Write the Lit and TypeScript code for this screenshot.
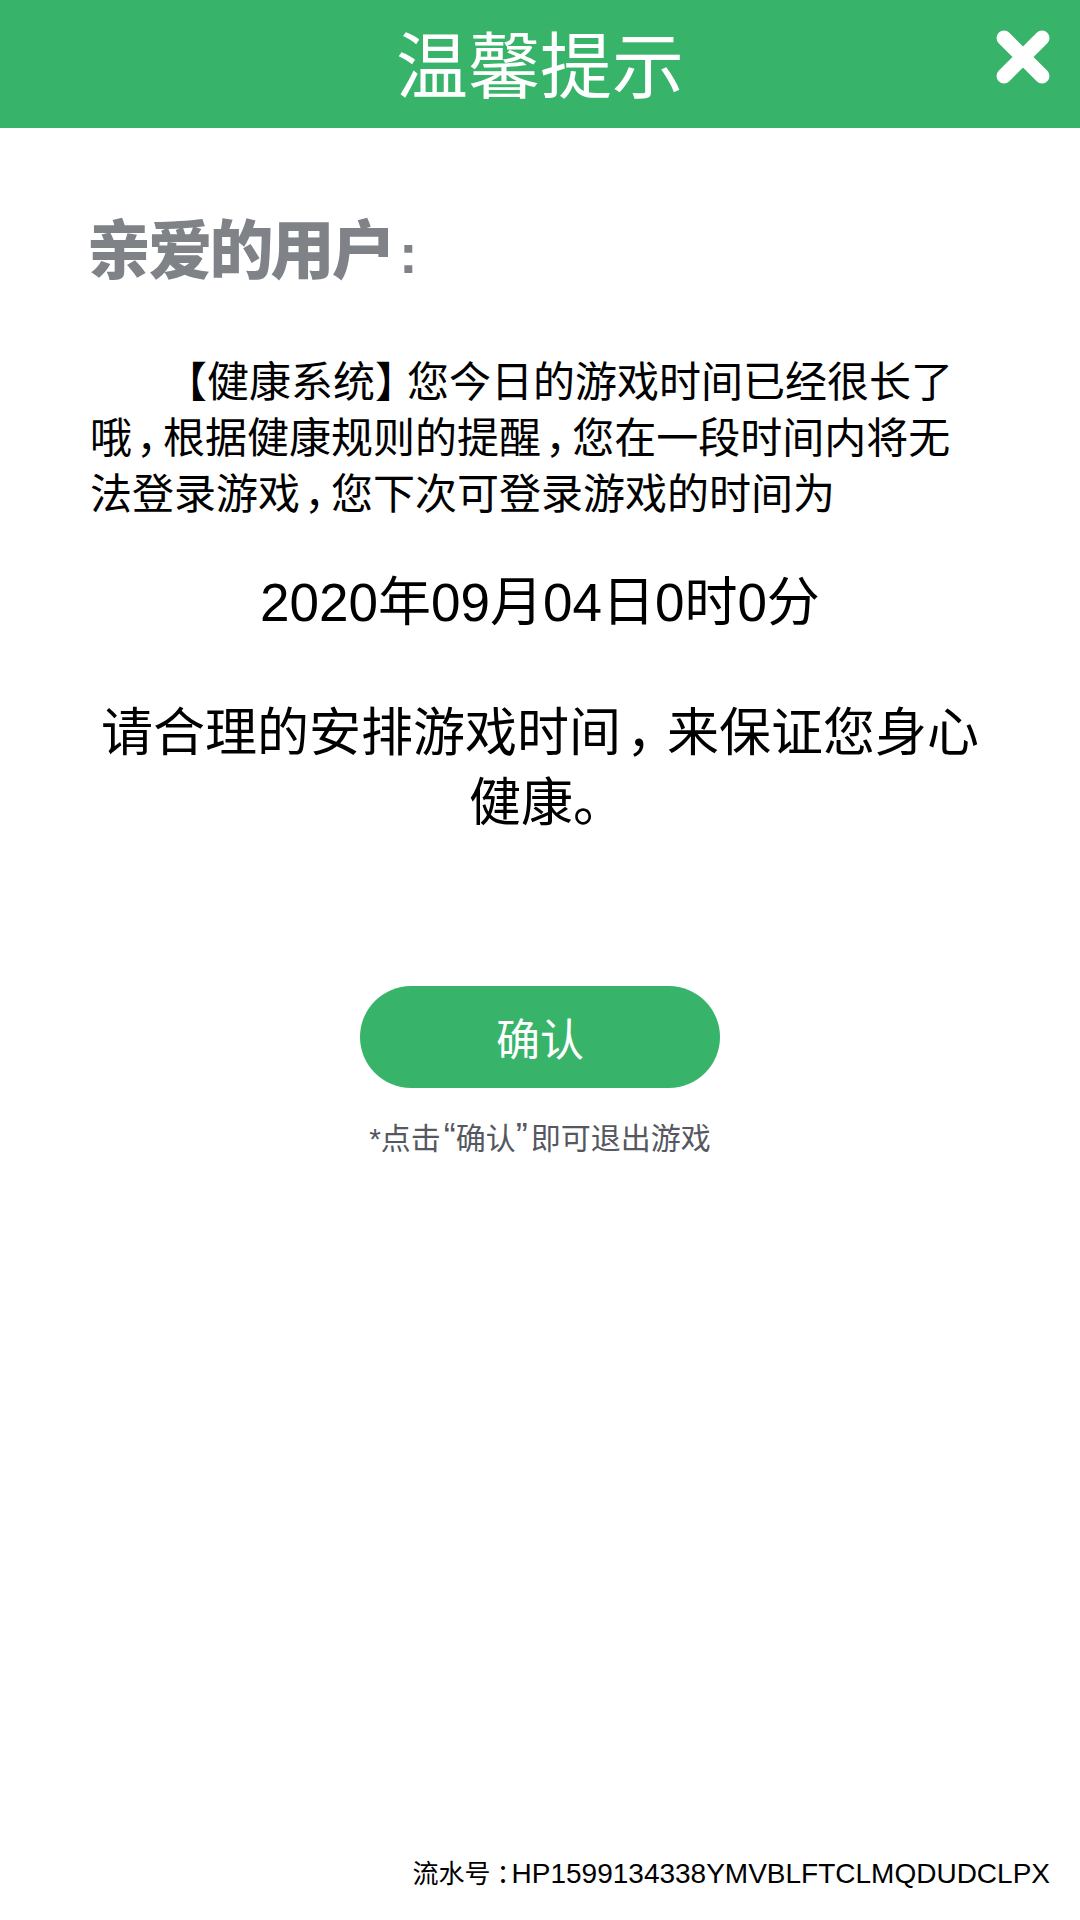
import { LitElement, html, css } from "lit";
import { customElement } from "lit/decorators.js";

@customElement("app-root")
export class AppRoot extends LitElement {
  static override styles = css`
    :host {
      display: flex;
      flex-direction: column;
      width: 1080px;
      height: 1920px;
      background: #fff;
      color: #000;
      font-family: "Liberation Sans", "Noto Sans CJK SC", sans-serif;
    }

    .header {
      position: relative;
      display: flex;
      align-items: center;
      justify-content: center;
      box-sizing: border-box;
      height: 128px;
      padding-bottom: 7px;
      background: #38b36a;
      color: #fff;
      font-size: 72px;
      font-weight: 400;
    }

    .close {
      position: absolute;
      left: 996px;
      top: 30px;
      width: 54px;
      height: 54px;
    }

    .content {
      display: flex;
      flex-direction: column;
      padding: 87px 92px 0 90px;
    }

    .greeting {
      margin-left: -3px;
      height: 72px;
      line-height: 72px;
      font-size: 64px;
      font-weight: 900;
      letter-spacing: -2.8px;
      color: #7f8388;
    }

    .greeting-colon {
      padding-left: 6px;
      font-size: 56px;
      font-weight: 700;
    }

    .intro {
      margin-top: 68px;
      font-size: 42px;
      line-height: 56px;
      white-space: nowrap;
    }

    .indent {
      padding-left: 75px;
    }

    .close-bracket {
      letter-spacing: -10px;
    }

    .comma {
      padding-left: 0.1em;
      letter-spacing: -0.36em;
    }

    .date {
      margin: 45px -2px 0 0;
      text-align: center;
      font-size: 53px;
      line-height: 70px;
    }

    .advice {
      margin: 60px -2px 0 0;
      text-align: center;
      font-size: 52px;
      line-height: 70px;
    }

    .advice .comma {
      letter-spacing: -0.22em;
    }

    .tail {
      padding-left: 14px;
    }

    .actions {
      display: flex;
      flex-direction: column;
      align-items: center;
      margin: 148px -2px 0 0;
    }

    .confirm {
      display: flex;
      align-items: center;
      justify-content: center;
      width: 360px;
      height: 102px;
      border-radius: 51px;
      background: #38b36a;
      color: #fff;
      font-size: 44px;
    }

    .note {
      margin-top: 31px;
      font-size: 30px;
      line-height: 40px;
      color: #55585e;
    }

    .quote {
      font-size: 36px;
      line-height: 30px;
    }

    .open-quote {
      padding-left: 3px;
    }

    .end-quote {
      padding-right: 3px;
    }

    .serial {
      margin-top: auto;
      padding: 0 30px 28px 0;
      text-align: right;
      font-size: 28px;
      line-height: 36px;
    }

    .serial-label {
      font-size: 26px;
    }

    .serial-colon {
      padding-left: 6px;
      letter-spacing: -11px;
    }
  `;

  override render() {
    const comma = html`<span class="comma">，</span>`;
    return html`
      <div class="header">
        温馨提示
        <svg class="close" viewBox="0 0 54 54">
          <path
            d="M8 8L46 46M46 8L8 46"
            stroke="#fff"
            stroke-width="15"
            stroke-linecap="round"
          />
        </svg>
      </div>
      <div class="content">
        <div class="greeting">亲爱的用户<span class="greeting-colon">:</span></div>
        <div class="intro">
          <div class="indent">
            【健康系统<span class="close-bracket">】</span>您今日的游戏时间已经很长了
          </div>
          <div>哦${comma}根据健康规则的提醒${comma}您在一段时间内将无</div>
          <div>法登录游戏${comma}您下次可登录游戏的时间为</div>
        </div>
        <div class="date">2020年09月04日0时0分</div>
        <div class="advice">
          <div>请合理的安排游戏时间${comma}来保证您身心</div>
          <div class="tail">健康。</div>
        </div>
        <div class="actions">
          <div class="confirm">确认</div>
          <div class="note">
            *点击<span class="quote open-quote">“</span>确认<span class="quote end-quote">”</span>即可退出游戏
          </div>
        </div>
      </div>
      <div class="serial">
        <span class="serial-label">流水号<span class="serial-colon">：</span></span>HP1599134338YMVBLFTCLMQDUDCLPX
      </div>
    `;
  }
}
